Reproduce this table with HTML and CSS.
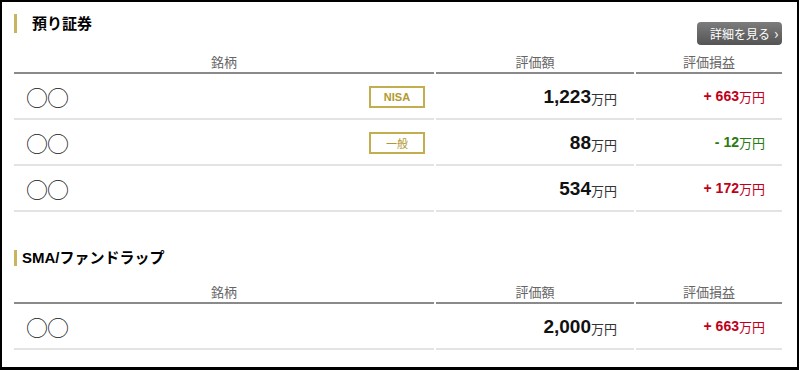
FILE: index.html
```html
<!DOCTYPE html>
<html lang="ja">
<head>
<meta charset="utf-8">
<link rel="stylesheet" href="styles.css">
</head>
<body>
<div class="frame">
  <section class="sec sec1">
    <div class="sec-head">
      <h2 class="title title1">預り証券</h2>
      <a class="more">詳細を見る <span class="chev">&#x203A;</span></a>
    </div>
    <div class="grid">
      <div class="th">銘柄</div><div class="th">評価額</div><div class="th">評価損益</div>
      <div class="td name"><span class="circ">○○</span><span class="badge">NISA</span></div>
      <div class="td val"><b>1,223</b><span class="unit">万円</span></div>
      <div class="td pl up"><b>+ 663</b><span class="unit">万円</span></div>
      <div class="td name"><span class="circ">○○</span><span class="badge plain">一般</span></div>
      <div class="td val"><b>88</b><span class="unit">万円</span></div>
      <div class="td pl down"><b>- 12</b><span class="unit">万円</span></div>
      <div class="td name"><span class="circ">○○</span></div>
      <div class="td val"><b>534</b><span class="unit">万円</span></div>
      <div class="td pl up"><b>+ 172</b><span class="unit">万円</span></div>
    </div>
  </section>
  <section class="sec sec2">
    <div class="sec-head">
      <h2 class="title title2">SMA/ファンドラップ</h2>
    </div>
    <div class="grid">
      <div class="th">銘柄</div><div class="th">評価額</div><div class="th">評価損益</div>
      <div class="td name"><span class="circ">○○</span></div>
      <div class="td val"><b>2,000</b><span class="unit">万円</span></div>
      <div class="td pl up"><b>+ 663</b><span class="unit">万円</span></div>
    </div>
  </section>
</div>
</body>
</html>
```
FILE: styles.css
```css
html, body { margin: 0; padding: 0; background: #fff; }
body { font-family: "Liberation Sans", "Noto Sans CJK JP", sans-serif; color: #000; }
.frame {
  box-sizing: border-box;
  width: 799px;
  height: 370px;
  border: 2px solid #000;
  border-bottom-width: 3px;
  padding: 0 0 0 12px;
}
.sec-head {
  display: flex;
  align-items: flex-start;
  justify-content: space-between;
  width: 768px;
}
.sec1 .sec-head { padding-top: 12px; height: 38px; }
.title {
  margin: 0;
  font-size: 15px;
  font-weight: bold;
  font-family: "Liberation Sans", "Noto Sans CJK JP", sans-serif;
  border-left: 3px solid #c8b560;
  line-height: 18px;
}
.title1 { padding-left: 15px; padding-top: 1px; }
.title2 { padding-left: 5px; line-height: 16px; }
.sec2 .sec-head { padding-top: 38px; height: 16px; }
.more {
  margin-top: 8px;
  display: flex;
  align-items: center;
  gap: 4px;
  box-sizing: border-box;
  width: 85px;
  height: 23px;
  padding-left: 13px;
  border-radius: 4px;
  background: linear-gradient(#7c7c7c, #545454);
  color: #fff;
  font-size: 12px;
  font-family: "Noto Sans CJK JP", sans-serif;
}
.chev { font-size: 15px; line-height: 1; margin-top: -2px; }
.grid {
  display: grid;
  grid-template-columns: 420px 198px 146px;
  column-gap: 2px;
  width: 768px;
}
.sec2 .grid { margin-top: 16px; }
.th {
  text-align: center;
  font-family: "Noto Sans CJK JP", sans-serif;
  font-size: 13px;
  color: #666;
  height: 20px;
  line-height: 20px;
  border-bottom: 2px solid #8a8a8a;
}
.td {
  height: 44px;
  border-bottom: 2px solid #e3e3e3;
  display: flex;
  align-items: center;
}
.name { justify-content: space-between; padding-left: 12px; padding-right: 9px; }
.circ {
  font-family: "Noto Sans CJK JP", sans-serif;
  font-size: 22px;
  font-weight: 300;
  letter-spacing: -1px;
  color: #111;
}
.badge {
  box-sizing: border-box;
  width: 56px;
  height: 22px;
  border: 2px solid #c2ae4e;
  color: #b29a30;
  font-size: 11px;
  font-family: "Liberation Sans", "Noto Sans CJK JP", sans-serif;
  font-weight: bold;
  display: flex;
  align-items: center;
  justify-content: center;
  margin-top: 2px;
}
.badge.plain { font-weight: normal; font-family: "Noto Sans CJK JP", sans-serif; }
.val { justify-content: flex-end; padding-right: 17px; }
.val, .pl { align-items: center; }
.val b { font-size: 19px; font-weight: bold; color: #111; }
.unit {
  font-family: "Noto Sans CJK JP", sans-serif;
  font-size: 13px;
  font-weight: normal;
  color: #333;
  margin-top: 5px;
}
.val b, .pl b { line-height: 1; }
.pl { justify-content: flex-end; padding-right: 17px; }
.pl b { font-size: 14px; font-weight: bold; }
.pl .unit { margin-top: 1px; }
.up b, .up .unit { color: #c0001a; }
.down b, .down .unit { color: #2a7a12; }
```
